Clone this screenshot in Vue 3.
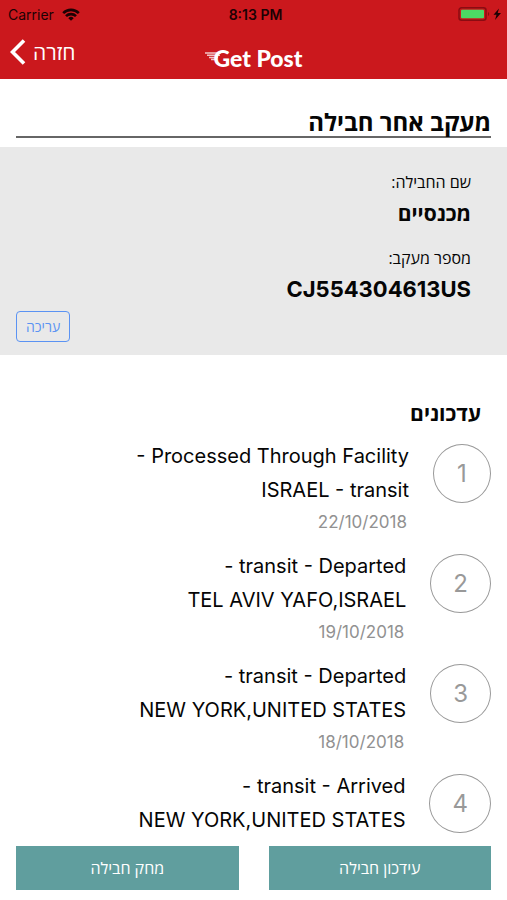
<script setup>
const updates = [
  { lines: ['- Processed Through Facility', 'ISRAEL - transit'], date: '22/10/2018' },
  { lines: ['- transit - Departed', 'TEL AVIV YAFO,ISRAEL'], date: '19/10/2018' },
  { lines: ['- transit - Departed', 'NEW YORK,UNITED STATES'], date: '18/10/2018' },
  { lines: ['- transit - Arrived', 'NEW YORK,UNITED STATES'], date: '' },
]
</script>

<template>
  <div class="screen" dir="rtl" lang="he">
    <header class="top">
      <div class="status" dir="ltr">
        <div class="carrier">
          <span>Carrier</span>
          <svg width="18" height="13" viewBox="0 0 18 13" aria-hidden="true">
            <g fill="none" stroke="#1c0204" stroke-width="2.6">
              <path d="M1.200 5.100a11 11 0 0 1 15.600 0" />
              <path d="M4 8.200a7 7 0 0 1 10 0" />
            </g>
            <path d="M9 12.800 6.300 10.200a3.800 3.800 0 0 1 5.400 0z" fill="#1c0204" />
          </svg>
        </div>
        <span class="time">8:13 PM</span>
        <div class="power">
          <svg width="46" height="16" viewBox="0 0 46 16" aria-hidden="true">
            <rect x="2" y="1.800" width="27" height="12.400" rx="2.500" fill="none" stroke="#8a0c12" stroke-width="1.500" />
            <rect x="4" y="3.800" width="23" height="8.400" rx="1" fill="#4cd964" />
            <path d="M31 6v4c1.600-.5 1.600-3.500 0-4z" fill="#8a0c12" />
            <path d="M42 2.500 36.500 8.700h3l-1.500 5.300 6-7h-3.300z" fill="#1c0204" />
          </svg>
        </div>
      </div>
      <nav class="nav" dir="ltr">
        <a class="back" href="#">
          <svg width="16" height="26" viewBox="0 0 16 26" aria-hidden="true">
            <path d="M14 1.500 2.500 13 14 24.500" fill="none" stroke="#fff" stroke-width="3.600" />
          </svg>
          <span>חזרה</span>
        </a>
        <div class="brand">
          <svg width="16" height="12" viewBox="0 0 16 12" aria-hidden="true">
            <g stroke="#fff" stroke-width="1.500" opacity=".75">
              <path d="M0 1h16M2 3.200h13M4 5.400h9M6 7.600h6" />
            </g>
          </svg>
          <span>Get Post</span>
        </div>
      </nav>
    </header>

    <main class="content">
      <h1 class="title">מעקב אחר חבילה</h1>
      <section class="parcel">
        <dl class="facts">
          <dt>שם החבילה:</dt>
          <dd>מכנסיים</dd>
          <dt>מספר מעקב:</dt>
          <dd class="code">CJ554304613US</dd>
        </dl>
        <button class="edit" type="button">עריכה</button>
      </section>

      <section class="updates">
        <h2 class="subtitle">עדכונים</h2>
        <ol class="list">
          <li v-for="(item, i) in updates" :key="i" class="item">
            <span class="number">{{ i + 1 }}</span>
            <div class="details" dir="ltr">
              <p v-for="line in item.lines" :key="line" class="line">{{ line }}</p>
              <p v-if="item.date" class="date">{{ item.date }}</p>
            </div>
          </li>
        </ol>
      </section>
    </main>

    <footer class="actions">
      <button class="action" type="button">עידכון חבילה</button>
      <button class="action" type="button">מחק חבילה</button>
    </footer>
  </div>
</template>

<style>
body {
  margin: 0;
  background: #fff;
}
</style>

<style scoped>
.screen {
  display: flex;
  flex-direction: column;
  height: 100vh;
  color: #050505;
  font-family: Inter, "Open Sans", "Noto Sans", sans-serif;
}
.top {
  flex: none;
  background: #cb181d;
}
.status {
  display: grid;
  grid-template-columns: 1fr auto 1fr;
  align-items: center;
  height: 28px;
  padding: 0 4px 0 8px;
  color: #1c0204;
  font-size: 14px;
}
.carrier {
  display: flex;
  align-items: center;
  gap: 8px;
}
.time {
  font-weight: 600;
}
.power {
  display: flex;
  justify-content: flex-end;
}
.nav {
  display: grid;
  grid-template-columns: 1fr auto 1fr;
  align-items: center;
  height: 51px;
  padding: 0 10px;
}
.back {
  display: flex;
  align-items: center;
  gap: 7px;
  padding-bottom: 4px;
  color: #fff;
  font-family: "Open Sans", sans-serif;
  font-size: 21px;
  line-height: 28px;
  text-decoration: none;
}
.brand {
  display: flex;
  align-items: center;
  padding-top: 8px;
  color: #fff;
  font-family: Lato, sans-serif;
  font-size: 23px;
  font-weight: 900;
  line-height: 24px;
}
.brand svg {
  margin-right: -7px;
}
.content {
  flex: 1;
  min-height: 0;
  overflow: hidden;
}
.title {
  margin: 29px 16px 9px;
  border-bottom: 2px solid #666;
  font-family: "Open Sans", sans-serif;
  font-size: 24px;
  font-weight: 700;
  line-height: 28px;
}
.parcel {
  display: flex;
  flex-direction: column;
  padding: 20px 36px 13px 16px;
  background: #e9e9e9;
}
.facts {
  margin: 0;
}
.facts dt {
  font-family: "Open Sans", sans-serif;
  font-size: 16px;
  line-height: 30px;
}
.facts dd {
  margin: 0 0 14px;
  font-family: "Open Sans", sans-serif;
  font-size: 21px;
  font-weight: 700;
  line-height: 32px;
}
.facts .code {
  margin-bottom: 6px;
  font-family: Inter, sans-serif;
  font-size: 22px;
  font-weight: 700;
}
.edit {
  align-self: flex-end;
  height: 31px;
  padding: 0 9px;
  border: 1px solid #5b93f3;
  border-radius: 4px;
  background: transparent;
  color: #5b93f3;
  font-family: "Open Sans", sans-serif;
  font-size: 14px;
}
.updates {
  padding: 42px 16px 0;
}
.subtitle {
  margin: 0 10px 10px;
  font-family: "Open Sans", sans-serif;
  font-size: 21px;
  font-weight: 700;
  line-height: 32px;
}
.list {
  margin: 0;
  padding: 0;
  list-style: none;
}
.item {
  display: flex;
  align-items: flex-start;
  gap: 24px;
  margin-bottom: 12px;
}
.number {
  box-sizing: border-box;
  min-width: 58px;
  height: 59px;
  margin-top: 5px;
  padding: 0 22px;
  border: 1px solid #999;
  border-radius: 50%;
  color: #999;
  font-size: 24px;
  line-height: 57px;
  text-align: center;
}
.details {
  text-align: right;
}
.line {
  margin: 0;
  font-size: 20px;
  line-height: 34px;
}
.date {
  margin: 0;
  padding-right: 2px;
  color: #919191;
  font-size: 17px;
  line-height: 30px;
}
.actions {
  display: flex;
  flex: none;
  gap: 30px;
  padding: 12px 16px 10px;
}
.action {
  flex: 1;
  height: 44px;
  padding: 0;
  border: 0;
  background: #609e9e;
  color: #fff;
  font-family: "Open Sans", sans-serif;
  font-size: 16px;
}
</style>
